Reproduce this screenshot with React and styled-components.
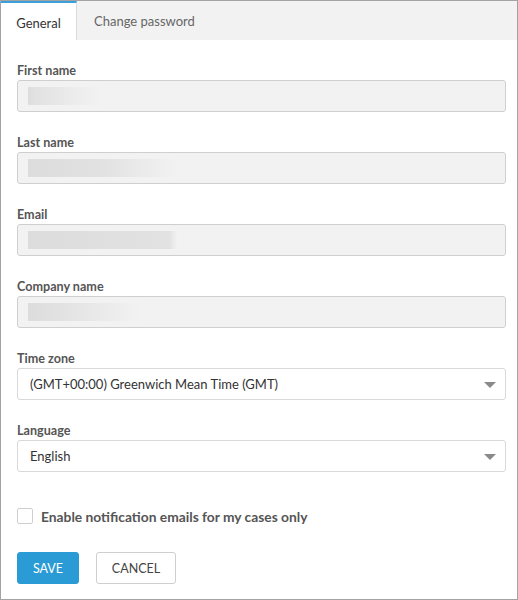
import React from "react";
import styled, { createGlobalStyle } from "styled-components";

const Global = createGlobalStyle`
  html, body { margin: 0; padding: 0; background: #fff; }
  body { font-family: Lato, "Open Sans", sans-serif; }
  * { box-sizing: border-box; }
`;

const Frame = styled.div`
  width: 518px;
  height: 600px;
  border: 1px solid #a3a3a3;
  background: #fff;
  display: flex;
  flex-direction: column;
  overflow: hidden;
`;

const TabBar = styled.div`
  display: flex;
  flex-shrink: 0;
  height: 39px;
  background: #f2f2f2;
`;

const Tab = styled.div`
  display: flex;
  align-items: center;
  justify-content: center;
  width: ${(p) => (p.$active ? "76px" : "auto")};
  padding: ${(p) => (p.$active ? "2px 0 0" : "0 17px 2px")};
  font-size: 13px;
  color: ${(p) => (p.$active ? "#333" : "#666")};
  background: ${(p) => (p.$active ? "#fff" : "transparent")};
  border-top: 2px solid ${(p) => (p.$active ? "#3b9fdb" : "transparent")};
  border-right: 1px solid ${(p) => (p.$active ? "#dcdcdc" : "transparent")};
`;

const Form = styled.div`
  display: flex;
  flex-direction: column;
  padding: 23px 11px 0 16px;
`;

const Field = styled.div`
  display: flex;
  flex-direction: column;
  margin-bottom: 23px;
`;

const Label = styled.label`
  font-size: 12.6px;
  font-weight: 700;
  color: #555;
  line-height: 15px;
  margin-bottom: 2px;
`;

const ReadOnlyInput = styled.div`
  height: 32px;
  background: #f2f2f2;
  border: 1px solid #cfcfcf;
  border-radius: 3px;
  display: flex;
  align-items: center;
  padding-left: 10px;
`;

const Blur = styled.div`
  height: 18px;
  border-radius: 1px;
  background: linear-gradient(to right, #dcdcdc 0%, #e2e2e2 ${(p) => p.$solid}%, #f2f2f2 100%);
`;

const Select = styled.div`
  position: relative;
  height: 32px;
  background: #fff;
  border: 1px solid #d9d9d9;
  border-radius: 3px;
  display: flex;
  align-items: center;
  padding-left: 12px;
  font-size: 13px;
  color: #333;
`;

const Caret = styled.span`
  position: absolute;
  right: 9px;
  top: 13px;
  width: 0;
  height: 0;
  border-left: 6px solid transparent;
  border-right: 6px solid transparent;
  border-top: 6px solid #8a8a8a;
`;

const CheckRow = styled.label`
  display: flex;
  align-items: center;
  gap: 8px;
  margin-top: 13px;
  height: 16px;
  font-size: 13.8px;
  font-weight: 700;
  color: #555;
`;

const Box = styled.span`
  width: 16px;
  height: 16px;
  border: 1px solid #cfcfcf;
  border-radius: 2px;
  background: #fff;
`;

const Buttons = styled.div`
  display: flex;
  gap: 17px;
  margin-top: 28px;
`;

const Button = styled.button`
  height: 32px;
  padding: 0;
  width: ${(p) => (p.$primary ? "62px" : "80px")};
  border-radius: 3px;
  font-family: Lato, sans-serif;
  font-size: 12.5px;
  text-transform: uppercase;
  border: 1px solid ${(p) => (p.$primary ? "#2a9bd5" : "#cfcfcf")};
  background: ${(p) => (p.$primary ? "#2a9bd5" : "#fff")};
  color: ${(p) => (p.$primary ? "#fff" : "#444")};
`;

const fields = [
  { label: "First name", w: 72, solid: 10 },
  { label: "Last name", w: 150, solid: 50 },
  { label: "Email", w: 149, solid: 95 },
  { label: "Company name", w: 112, solid: 30 },
];

export default function App() {
  return (
    <>
      <Global />
      <Frame>
        <TabBar>
          <Tab $active>General</Tab>
          <Tab>Change password</Tab>
        </TabBar>
        <Form>
          {fields.map((f) => (
            <Field key={f.label}>
              <Label>{f.label}</Label>
              <ReadOnlyInput>
                <Blur $solid={f.solid} style={{ width: f.w }} />
              </ReadOnlyInput>
            </Field>
          ))}
          <Field>
            <Label>Time zone</Label>
            <Select>
              (GMT+00:00) Greenwich Mean Time (GMT)
              <Caret />
            </Select>
          </Field>
          <Field>
            <Label>Language</Label>
            <Select>
              English
              <Caret />
            </Select>
          </Field>
          <CheckRow>
            <Box />
            Enable notification emails for my cases only
          </CheckRow>
          <Buttons>
            <Button $primary>Save</Button>
            <Button>Cancel</Button>
          </Buttons>
        </Form>
      </Frame>
    </>
  );
}
